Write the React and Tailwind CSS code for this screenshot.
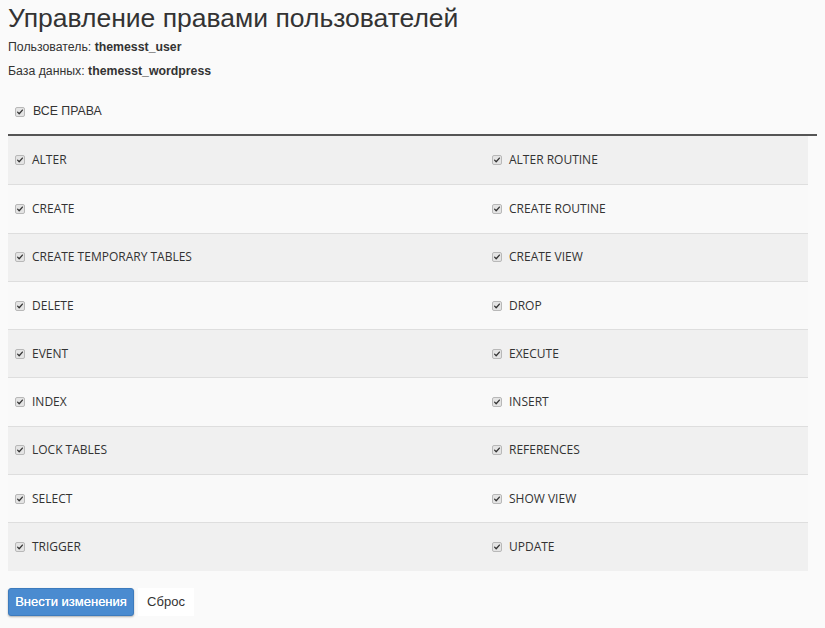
import React from 'react';

const rows = [
  ['ALTER', 'ALTER ROUTINE'],
  ['CREATE', 'CREATE ROUTINE'],
  ['CREATE TEMPORARY TABLES', 'CREATE VIEW'],
  ['DELETE', 'DROP'],
  ['EVENT', 'EXECUTE'],
  ['INDEX', 'INSERT'],
  ['LOCK TABLES', 'REFERENCES'],
  ['SELECT', 'SHOW VIEW'],
  ['TRIGGER', 'UPDATE'],
];

const Check = () => (
  <span className="inline-flex h-[10px] w-[10px] items-center justify-center rounded-[2px] border border-[#b8b8b8] bg-[#e4e4e4]">
    <svg viewBox="0 0 10 10" className="h-[8px] w-[8px]">
      <path d="M2 5.2 L4 7.2 L8 2.6" fill="none" stroke="#333" strokeWidth="1.6" strokeLinecap="round" strokeLinejoin="round" />
    </svg>
  </span>
);

const Cell = ({ label }) => (
  <div className="flex items-center gap-[7px] px-[7px]">
    <Check />
    <span className="text-[12px] text-[#333]" style={{ fontFamily: '"Open Sans", sans-serif' }}>{label}</span>
  </div>
);

const App = () => {
  return (
    <div className="min-h-screen bg-[#fafafa] px-[8px] text-[#333]" style={{ fontFamily: '"Liberation Sans", Arial, sans-serif' }}>
      <h1 className="pt-[1px] text-[26.5px] leading-[34px] font-normal text-[#333]">Управление правами пользователей</h1>
      <p className="mt-[4px] text-[12.3px] leading-[16px]">Пользователь: <b>themesst_user</b></p>
      <p className="mt-[8px] text-[12.3px] leading-[16px]">База данных: <b>themesst_wordpress</b></p>

      <div className="mt-[22px] flex h-[35px] items-center border-b-2 border-[#555] px-[7px] pb-[12px]">
        <div className="flex items-center gap-[8px]">
          <Check />
          <span className="text-[12.3px]">ВСЕ ПРАВА</span>
        </div>
      </div>

      <div className="w-[800px]">
        {rows.map(([a, b], i) => (
          <div
            key={a}
            className={`grid h-[48.3px] grid-cols-[477px_1fr] items-center ${i % 2 === 0 ? 'bg-[#f0f0f0]' : 'bg-[#f9f9f9]'} ${i > 0 ? 'border-t border-[#dedede]' : ''}`}
          >
            <Cell label={a} />
            <Cell label={b} />
          </div>
        ))}
      </div>

      <div className="mt-[17px] flex items-center gap-[4px]">
        <button className="h-[28px] w-[126px] rounded-[3px] border border-[#3d7bbd] bg-[#4a8bd0] text-[13px] font-normal text-white shadow-[0_1px_2px_rgba(0,0,0,0.3)] [text-shadow:0_0_0.4px_#fff]">
          Внести изменения
        </button>
        <button className="h-[28px] w-[56px] bg-white text-[13px] text-[#333]">Сброс</button>
      </div>
    </div>
  );
};

export default App;
